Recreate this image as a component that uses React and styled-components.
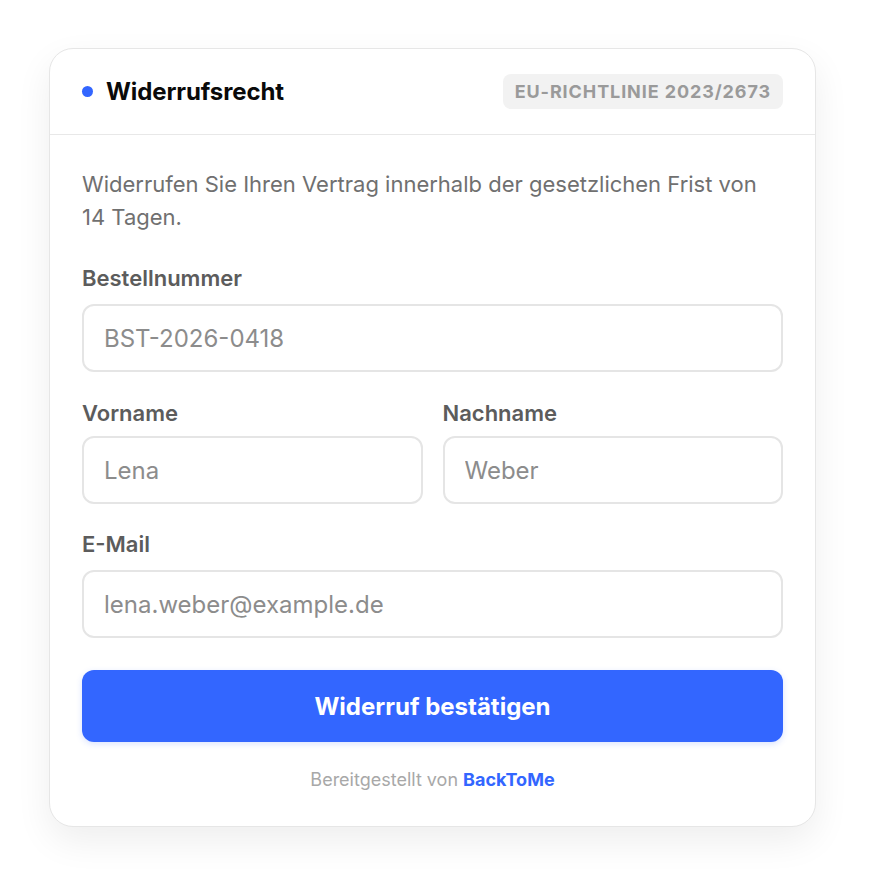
import React from "react";
import styled, { createGlobalStyle } from "styled-components";

const Global = createGlobalStyle`
  * { box-sizing: border-box; }
  html, body { margin: 0; padding: 0; background: #ffffff; }
  body { font-family: Inter, "Noto Sans", sans-serif; -webkit-font-smoothing: antialiased; }
`;

const Page = styled.div`
  padding: 48px 0 48px 49px;
`;

const Card = styled.div`
  width: 767px;
  background: #fff;
  border: 1.5px solid #e6e6e6;
  border-radius: 24px;
  box-shadow: 0 14px 36px rgba(0, 0, 0, 0.07);
  overflow: hidden;
`;

const Header = styled.div`
  display: flex;
  align-items: center;
  justify-content: space-between;
  height: 86px;
  padding: 0 32px;
  border-bottom: 1.5px solid #e8e8e8;
`;

const TitleWrap = styled.div`
  display: flex;
  align-items: center;
  gap: 13px;
`;

const Dot = styled.span`
  width: 11px;
  height: 11px;
  border-radius: 50%;
  background: #3366ff;
`;

const Title = styled.h1`
  margin: 0;
  font-size: 24px;
  font-weight: 700;
  color: #0a0a0a;
  letter-spacing: -0.1px;
`;

const Badge = styled.span`
  background: #f2f2f2;
  color: #9a9a9a;
  font-size: 18px;
  font-weight: 700;
  letter-spacing: 0.05em;
  text-transform: uppercase;
  padding: 7px 12px;
  border-radius: 8px;
  line-height: 21px;
`;

const Body = styled.div`
  padding: 33px 32px 33px;
  display: flex;
  flex-direction: column;
`;

const Intro = styled.p`
  margin: 0 0 30px;
  font-size: 22px;
  line-height: 33px;
  color: #707070;
`;

const Field = styled.div`
  display: flex;
  flex-direction: column;
  gap: ${(p) => p.$gap ?? 12}px;
  margin-bottom: ${(p) => p.$mb ?? 26}px;
  flex: 1;
`;

const Row = styled.div`
  display: flex;
  gap: 20px;
`;

const Label = styled.label`
  font-size: 22px;
  line-height: 28px;
  font-weight: 600;
  color: #5c5c5c;
`;

const Input = styled.input`
  width: 100%;
  height: 68px;
  border: 2px solid #e5e5e5;
  border-radius: 12px;
  padding: 0 20px;
  font-family: inherit;
  font-size: 24px;
  color: #333;
  background: #fff;
  outline: none;
  &::placeholder { color: #8c8c8c; }
`;

const Button = styled.button`
  height: 72px;
  width: 100%;
  border: none;
  border-radius: 12px;
  background: #3366ff;
  color: #fff;
  font-family: inherit;
  font-size: 24px;
  font-weight: 700;
  box-shadow: 0 2px 6px rgba(51, 102, 255, 0.18);
  cursor: pointer;
`;

const Footer = styled.div`
  margin-top: 24px;
  text-align: center;
  font-size: 18px;
  line-height: 27px;
  color: #a8a8a8;
`;

const Brand = styled.span`
  color: #3366ff;
  font-weight: 700;
`;

export default function App() {
  return (
    <>
      <Global />
      <Page>
        <Card>
          <Header>
            <TitleWrap>
              <Dot />
              <Title>Widerrufsrecht</Title>
            </TitleWrap>
            <Badge>EU-Richtlinie 2023/2673</Badge>
          </Header>
          <Body>
            <Intro>
              Widerrufen Sie Ihren Vertrag innerhalb der gesetzlichen Frist von 14 Tagen.
            </Intro>
            <Field $mb={27}>
              <Label>Bestellnummer</Label>
              <Input placeholder="BST-2026-0418" />
            </Field>
            <Row>
              <Field $gap={9}>
                <Label>Vorname</Label>
                <Input placeholder="Lena" />
              </Field>
              <Field $gap={9}>
                <Label>Nachname</Label>
                <Input placeholder="Weber" />
              </Field>
            </Row>
            <Field $mb={32}>
              <Label>E-Mail</Label>
              <Input placeholder="lena.weber@example.de" />
            </Field>
            <Button>Widerruf bestätigen</Button>
            <Footer>
              Bereitgestellt von <Brand>BackToMe</Brand>
            </Footer>
          </Body>
        </Card>
      </Page>
    </>
  );
}
